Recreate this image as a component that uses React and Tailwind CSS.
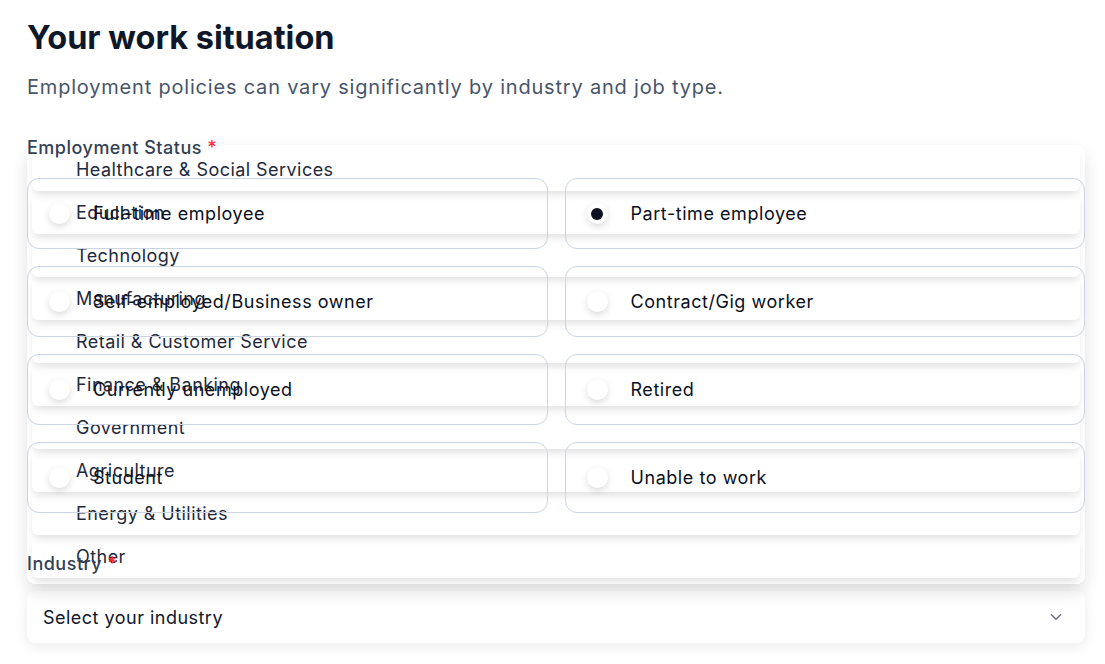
import React, { useState } from "react";
import { ChevronDown } from "lucide-react";

const statuses = [
  "Full-time employee",
  "Part-time employee",
  "Self-employed/Business owner",
  "Contract/Gig worker",
  "Currently unemployed",
  "Retired",
  "Student",
  "Unable to work",
];

const industries = [
  "Healthcare & Social Services",
  "Education",
  "Technology",
  "Manufacturing",
  "Retail & Customer Service",
  "Finance & Banking",
  "Government",
  "Agriculture",
  "Energy & Utilities",
  "Other",
];

const App = () => {
  const [status, setStatus] = useState("Part-time employee");

  return (
    <div className="min-h-screen bg-white font-['Inter',sans-serif]">
      <div className="w-[1058px] ml-[27px] pt-[18px]">
        <h1 className="text-[32.5px] leading-[40px] font-bold text-[#0f172a]">Your work situation</h1>
        <p className="mt-[15px] text-[20px] leading-[28px] tracking-[0.8px] text-[#475569]">
          Employment policies can vary significantly by industry and job type.
        </p>

        <label className="relative z-10 block mt-[34px] text-[18px] leading-[26px] tracking-[0.5px] font-medium text-[#334155]">
          Employment Status <span className="text-red-500">*</span>
        </label>

        <div className="relative z-10 mt-[17px] grid grid-cols-2 gap-x-[17px] gap-y-[17px]">
          {statuses.map((s) => (
            <button
              key={s}
              onClick={() => setStatus(s)}
              className="h-[71px] flex items-center pl-[21px] border border-[#cbd5e1] rounded-[12px] text-left"
            >
              <span className="w-[21px] h-[21px] rounded-full bg-white shadow-[0_3px_7px_rgba(0,0,0,0.14)] flex items-center justify-center shrink-0">
                {status === s && <span className="w-[12px] h-[12px] rounded-full bg-[#0b1020]" />}
              </span>
              <span className="ml-[23px] text-[18px] leading-[26px] tracking-[0.55px] text-[#0a0f1c]">{s}</span>
            </button>
          ))}
        </div>

        <label className="relative z-10 block mt-[38px] text-[18px] leading-[26px] tracking-[0.5px] font-medium text-[#334155]">
          Industry <span className="text-red-500">*</span>
        </label>

        <div className="relative mt-[14px]">
          <ul className="absolute z-0 left-0 right-0 bottom-full mb-[7px] bg-white rounded-[8px] shadow-[0_8px_16px_rgba(0,0,0,0.12)] px-[5px] pt-[3px] pb-[6px]">
            {industries.map((ind, i) => (
              <li
                key={ind}
                style={{ zIndex: 20 - i }}
                className="relative h-[43px] flex items-center pl-[44px] bg-white rounded-[6px] shadow-[0_5px_8px_-2px_rgba(0,0,0,0.13)] text-[18px] tracking-[0.45px] text-[#1e293b]"
              >
                {ind}
              </li>
            ))}
          </ul>
          <div className="h-[52px] flex items-center justify-between pl-[16px] pr-[20px] bg-white rounded-[8px] shadow-[0_4px_14px_rgba(0,0,0,0.08)]">
            <span className="text-[18px] tracking-[0.48px] text-[#0f172a]">Select your industry</span>
            <ChevronDown className="w-[18px] h-[18px] text-[#6b7280]" strokeWidth={2} />
          </div>
        </div>
      </div>
    </div>
  );
};

export default App;
